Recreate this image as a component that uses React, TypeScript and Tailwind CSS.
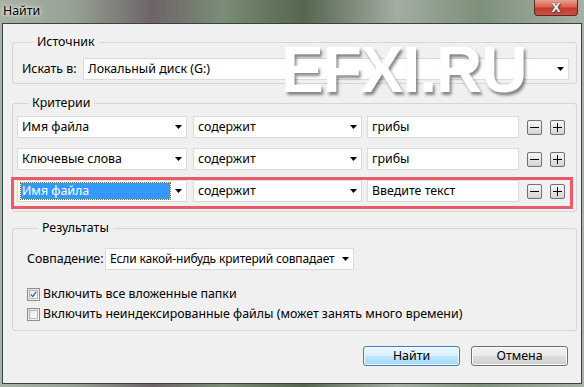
import React from "react";

const Arrow = () => (
  <svg width="7" height="4" viewBox="0 0 7 4" className="shrink-0">
    <polygon points="0,0 7,0 3.5,4" fill="#000" />
  </svg>
);

const Combo = ({ text, w, selected }: { text: string; w: string; selected?: boolean }) => (
  <div className={`${w} h-[22px] bg-white border border-[#dadada] flex items-center pl-[3px] pr-[4px] shrink-0`}>
    {selected ? (
      <span className="flex-1 h-[16px] flex items-center bg-[#3399ff] text-white pl-[1px] outline outline-1 outline-dotted outline-[#8a6a2a]">
        {text}
      </span>
    ) : (
      <span className="flex-1 pl-[1px] whitespace-nowrap">{text}</span>
    )}
    <span className="ml-[5px]">
      <Arrow />
    </span>
  </div>
);

const SmallBtn = ({ plus }: { plus?: boolean }) => (
  <div className="w-[15px] h-[15px] border border-[#707070] rounded-[2px] bg-[linear-gradient(180deg,#f6f6f6_0%,#e6e6e6_50%,#d4d4d4_100%)] flex items-center justify-center shrink-0">
    <svg width="11" height="11" viewBox="0 0 11 11">
      <rect x="1" y="5" width="9" height="1" fill="#000" />
      {plus && <rect x="5" y="1" width="1" height="9" fill="#000" />}
    </svg>
  </div>
);

const Row = ({ field, text, sel }: { field: string; text: string; sel?: boolean }) => (
  <div className="flex items-center relative self-start">
    <Combo text={field} w="w-[170px]" selected={sel} />
    <div className="w-[6px]" />
    <Combo text="содержит" w="w-[169px]" />
    <div className="w-[5px]" />
    <div className="w-[152px] h-[22px] bg-white border border-[#dadada] flex items-center pl-[4px] shrink-0">{text}</div>
    <div className="w-[8px]" />
    <SmallBtn />
    <div className="w-[8px]" />
    <SmallBtn plus />
    {sel && (
      <div className="absolute -left-[6px] -right-[8px] -top-[3px] -bottom-[7px] border-[3px] border-[#e95b68] pointer-events-none" />
    )}
  </div>
);

const CheckBox = ({ checked }: { checked?: boolean }) => (
  <div className="w-[13px] h-[13px] border border-[#8e8f8f] bg-[linear-gradient(135deg,#dcdcdc_0%,#f6f6f6_100%)] flex items-center justify-center shrink-0">
    <div className="w-[9px] h-[9px] border border-[#b8b8b8] bg-[linear-gradient(135deg,#e8e8e8_0%,#fbfbfb_100%)] flex items-center justify-center">
      {checked && (
        <svg width="9" height="9" viewBox="0 0 9 9">
          <path d="M1 4.5 L3.5 7 L8 1" stroke="#4a5f97" strokeWidth="1.6" fill="none" />
        </svg>
      )}
    </div>
  </div>
);

export default function App() {
  return (
    <div
      className="w-[584px] h-[387px] relative overflow-hidden flex flex-col text-[12.4px] text-black bg-[linear-gradient(90deg,#a8b2a5_0%,#97a395_12%,#6e6467_26%,#7a8d77_38%,#56664f_52%,#a3ada2_68%,#7c9079_82%,#a7b1a6_100%)]"
      style={{ fontFamily: '"Noto Sans", "DejaVu Sans", sans-serif' }}
    >
      {/* title bar */}
      <div className="h-[23px] flex items-start justify-between shrink-0">
        <div className="pl-[3px] pt-[2px] text-[12.4px] [text-shadow:0_0_6px_#fff,0_0_3px_#fff]">Найти</div>
        <div className="mr-[6px] w-[44px] h-[16px] rounded-b-[4px] border border-t-0 border-[#5b2a24] bg-[linear-gradient(180deg,#e9a194_0%,#d8634f_45%,#c13b2b_55%,#cc5442_100%)] flex items-center justify-center">
          <span className="text-white font-bold text-[13px] leading-none [text-shadow:0_0_1px_#333,1px_1px_1px_#444]" style={{ fontFamily: '"Liberation Sans", sans-serif' }}>
            X
          </span>
        </div>
      </div>

      {/* client area */}
      <div className="flex-1 ml-[2px] mr-[2px] mb-[3px] border border-[#37424c] bg-[#f0f0f0] flex flex-col">
        <fieldset className="ml-[9px] mr-[4px] mt-[10px] border border-[#d5d5d5] rounded-[3px] pl-[9px] pr-[7px] pt-[8px] pb-[3px]">
          <legend className="ml-[11px] px-[4px] leading-[16px]">Источник</legend>
          <div className="flex items-center">
            <div className="w-[61px] whitespace-nowrap">Искать в:</div>
            <div className="flex-1 h-[22px] bg-white border border-[#dadada] flex items-center pl-[4px] pr-[4px]">
              <span className="flex-1">Локальный диск (G:)</span>
              <Arrow />
            </div>
          </div>
        </fieldset>

        <fieldset className="ml-[9px] mr-[4px] mt-[11px] border border-[#d5d5d5] rounded-[3px] pl-[4px] pt-[5px] pb-[9px] flex flex-col gap-[10px]">
          <legend className="ml-[11px] px-[4px] leading-[16px]">Критерии</legend>
          <Row field="Имя файла" text="грибы" />
          <Row field="Ключевые слова" text="грибы" />
          <Row field="Имя файла" text="Введите текст" sel />
        </fieldset>

        <fieldset className="ml-[9px] mr-[4px] mt-[8px] border border-[#d5d5d5] rounded-[3px] pl-[14px] pt-[12px] pb-[8px] flex flex-col">
          <legend className="ml-[11px] px-[4px] leading-[16px]">Результаты</legend>
          <div className="flex items-center">
            <div className="w-[78px] whitespace-nowrap">Совпадение:</div>
            <div className="w-[249px] h-[22px] bg-white border border-[#dadada] flex items-center pl-[4px] pr-[4px]">
              <span className="flex-1 whitespace-nowrap text-[12px] tracking-[-0.15px]">Если какой-нибудь критерий совпадает</span>
              <span className="ml-[3px]">
                <Arrow />
              </span>
            </div>
          </div>
          <div className="flex items-center mt-[16px] h-[16px]">
            <CheckBox checked />
            <span className="ml-[3px] whitespace-nowrap">Включить все вложенные папки</span>
          </div>
          <div className="flex items-center mt-[4px] h-[16px]">
            <CheckBox />
            <span className="ml-[3px] whitespace-nowrap">Включить неиндексированные файлы (может занять много времени)</span>
          </div>
        </fieldset>

        <div className="flex justify-end gap-[11px] mt-[15px] mr-[13px]">
          <button className="w-[97px] h-[20px] rounded-[3px] border border-[#3c7fb1] bg-[linear-gradient(180deg,#eaf6fd_0%,#d9f0fc_50%,#bee6fd_51%,#a7d9f5_100%)] shadow-[inset_0_0_0_1px_#f4fbff] leading-none">
            Найти
          </button>
          <button className="w-[97px] h-[20px] rounded-[3px] border border-[#707070] bg-[linear-gradient(180deg,#f2f2f2_0%,#ebebeb_50%,#dddddd_51%,#cfcfcf_100%)] shadow-[inset_0_0_0_1px_#fbfbfb] leading-none">
            Отмена
          </button>
        </div>
      </div>

      {/* watermark */}
      <div
        className="absolute left-[281px] top-[38px] text-[64px] font-bold leading-none tracking-[-1px] text-white [text-shadow:2px_3px_3px_rgba(0,0,0,0.45)] pointer-events-none"
        style={{ fontFamily: '"Liberation Sans", sans-serif' }}
      >
        EFXI.RU
      </div>
    </div>
  );
}
